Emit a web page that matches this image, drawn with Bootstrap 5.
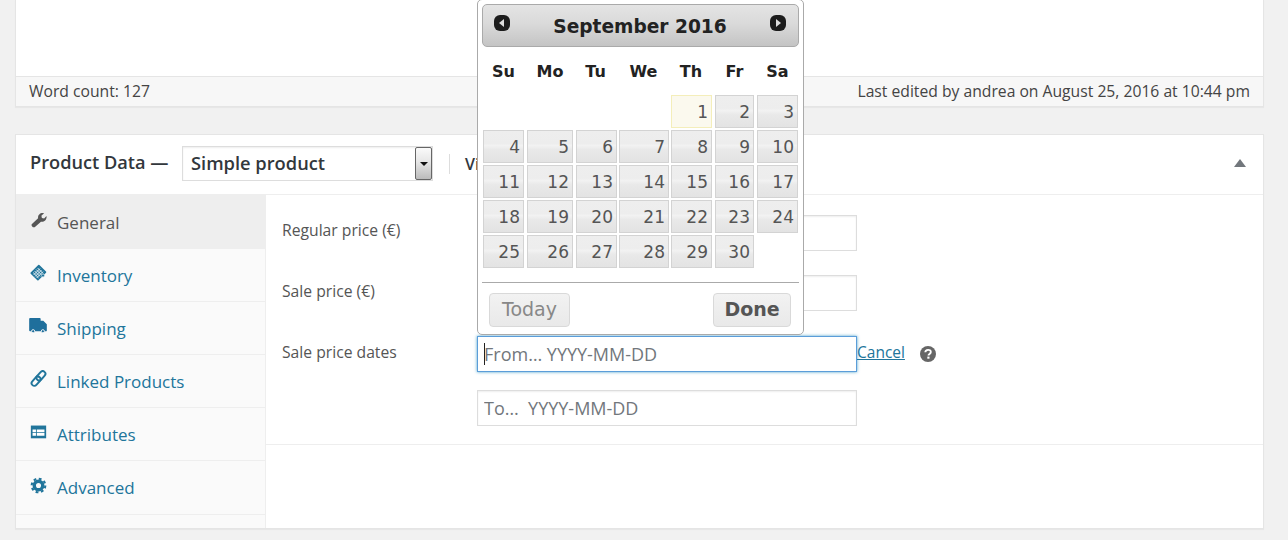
<!DOCTYPE html>
<html lang="en">
<head>
<meta charset="utf-8">
<title>Product Data</title>
<link href="https://cdn.jsdelivr.net/npm/bootstrap@5.3.0/dist/css/bootstrap.min.css" rel="stylesheet">
<style>
html,body{height:540px;overflow:hidden}
body{background:#f1f1f1;font-family:"Open Sans",sans-serif;font-size:15.7px;color:#555;padding:0 24px 0 15px;position:relative}
.edit-box{background:#fff;border:1px solid #e5e5e5;border-top:0;box-shadow:0 1px 1px rgba(0,0,0,.04);height:107px;margin-bottom:27px;display:flex;flex-direction:column;justify-content:flex-end}
.status-bar{height:30px;background:#f7f7f7;border-top:1px solid #e5e5e5;padding:0 13px;color:#444}
.data-box{background:#fff;border:1px solid #e5e5e5;box-shadow:0 1px 1px rgba(0,0,0,.04);height:395px;display:flex;flex-direction:column}
.data-head{height:60px;flex:none;border-bottom:1px solid #eee;padding:0 17px 2px 14px;display:flex;align-items:center}
.data-title{font-weight:600;font-size:18.200px;color:#32373c;white-space:nowrap;width:152px;flex:none;margin-top:-2px}
.type-select{width:251px;height:35px;flex:none;border:1px solid #ddd;display:flex;align-items:stretch;font-weight:600;font-size:18.300px;color:#32373c;box-shadow:inset 0 1px 2px rgba(0,0,0,.07)}
.type-name{flex:1;padding-left:8px;line-height:32px}
.type-arrow{width:17px;flex:none;border:1px solid #666;border-radius:2px;background:linear-gradient(#fafafa,#e6e6e6 45%,#bbb);display:flex;align-items:center;justify-content:center}
.type-arrow i{display:block;border:4px solid transparent;border-top-color:#111;border-bottom:0}
.head-sep{width:1px;height:20px;background:#ddd;margin:0 15px 0 16px;flex:none}
.virtual-label{font-weight:600;color:#32373c;font-size:16px}
.collapse-arrow{margin-left:auto;border:6px solid transparent;border-bottom:8px solid #72777c;border-top:0;margin-top:-2px}
.data-body{flex:1;display:flex;min-height:0}
.tab-col{width:250px;flex:none;background:#fafafa;border-right:1px solid #eee;margin:0;padding:0;list-style:none}
.tab-row{height:53px;border-bottom:1px solid #eee;display:flex;align-items:center;padding:0 14px;gap:10px;color:#21759b;font-size:17px}
.tab-row svg{flex:none;width:17px;height:17px;margin-top:-5px}
.tab-row span{margin-top:2px}
.tab-row.is-on{background:#eee;color:#555;height:54px;border-bottom:0}
.tab-row.tall{height:54px}
.tab-row.tall span{margin-top:0}
.panel-col{flex:1;min-width:0}
.form-area{padding:20px 0 18px 16px;border-bottom:1px solid #eee}
.field-row{display:flex;align-items:center;margin-bottom:24px}
.field-row.wide-gap{margin-bottom:25px}
.field-row.third{margin-bottom:18px}
.field-row.last{margin-bottom:0}
.field-label{width:195px;flex:none;padding-bottom:4px;color:#555}
.wide-gap .field-label,.third .field-label{padding-bottom:2px}
.field-wrap{position:relative;width:380px;flex:none}
.form-control.wc-input{height:36px;border-radius:0;border:1px solid #ddd;padding:0 6px;font-size:18px;box-shadow:inset 0 1px 2px rgba(0,0,0,.07);font-family:"Open Sans",sans-serif}
.form-control.wc-input::placeholder{color:#72777c;opacity:1}
.form-control.wc-input.is-focus{border-color:#5b9dd9;box-shadow:0 0 3px rgba(30,140,190,.8)}
.fake-caret{position:absolute;left:7px;top:7px;width:1px;height:22px;background:#222}
.cancel-link{color:#21759b;font-size:15.500px;margin-top:-3px}
.help-dot{width:16px;height:16px;margin-left:15px}
.picker{position:absolute;left:477px;top:-1px;width:327px;height:336px;background:#fff;border:1px solid #aaa;border-radius:5px;padding:4px;font-family:"DejaVu Sans",sans-serif;color:#222}
.picker-head{height:43px;border:1px solid #aaa;border-radius:5px;background:linear-gradient(#e4e4e4,#dadada 45%,#c4c4c4);display:flex;align-items:center;justify-content:space-between;padding:0 11px 0 10px;font-weight:700;font-size:18.600px;color:#222}
.picker-head span{margin-top:2px}
.picker-head svg{width:18px;height:18px;margin-top:-6px}
.picker-table{table-layout:fixed;width:315px;margin:0 0 0 1px;border-collapse:separate;border-spacing:0}
.picker-table th{height:48px;padding:2px 0 0;text-align:center;font-size:16px;font-weight:700;color:#222}
.picker-table td{padding:0;height:35px;vertical-align:top}
.picker-table th:nth-child(1),.picker-table th:nth-child(2),.picker-table th:nth-child(4),.picker-table th:nth-child(6){padding-right:3px}
.picker-table th:nth-child(3),.picker-table th:nth-child(5){padding-right:4px}
.day-cell{display:block;height:33px;border:1px solid #d3d3d3;background:linear-gradient(#eee,#ededed 40%,#f2f2f2 47%,#e9e9e9 60%,#e3e3e3);text-align:right;padding-right:3px;font-size:17px;line-height:32px;color:#555}
.day-cell.today{background:#fbf9ee;border-color:#f4eeba}
td:nth-child(1) .day-cell,td:nth-child(2) .day-cell,td:nth-child(5) .day-cell,td:nth-child(6) .day-cell{margin-right:3px}
td:nth-child(3) .day-cell,td:nth-child(4) .day-cell{margin-right:2px}
.picker-rule{height:1px;background:#aaa;margin:12px 0 10px;border:0;opacity:1}
.picker-foot{display:flex;justify-content:space-between;padding:0 7px}
.pick-btn{height:34px;border:1px solid #d9d9d9;border-radius:4px;background:linear-gradient(#f2f2f2,#eee 45%,#e9e9e9);font-family:"DejaVu Sans",sans-serif;font-size:19px;line-height:28px;padding:0 0 2px;color:#555}
.pick-btn.faded{width:81px;color:#888}
.pick-btn.strong{width:78px;font-weight:700;margin-right:1px}
</style>
</head>
<body>
<div class="edit-box">
  <div class="status-bar d-flex justify-content-between align-items-center">
    <span>Word count: 127</span>
    <span>Last edited by andrea on August 25, 2016 at 10:44 pm</span>
  </div>
</div>

<div class="data-box">
  <div class="data-head">
    <div class="data-title">Product Data —</div>
    <div class="type-select"><div class="type-name">Simple product</div><div class="type-arrow"><i></i></div></div>
    <div class="head-sep"></div>
    <div class="virtual-label">Virtual:</div>
    <div class="collapse-arrow"></div>
  </div>
  <div class="data-body">
    <ul class="tab-col">
      <li class="tab-row is-on">
        <svg viewBox="0 0 20 20"><path fill="#555" d="M2 15.500 9.500 8.600C9 5 12 1.600 16.500 2.600L13.400 5.600l.6 2.600 2.600.6 2.800-3c.8 4-2.600 7.400-6.500 6.700L5.500 19C3.500 20 1 17.500 2 15.500Z"/></svg>
        <span>General</span>
      </li>
      <li class="tab-row">
        <svg viewBox="0 0 20 20"><g transform="rotate(45 10 10)"><rect x="3.500" y="3" width="13" height="14.500" rx="1" fill="#21759b"/><path stroke="#fff" stroke-width=".9" d="M5.500 7h9M5.500 9.500h9M5.500 12h9M5.500 14.500h9M8 5.500v10.500M10.500 5.500v10.500M13 5.500v10.500"/><rect x="14.500" y="7" width="3.500" height="3.500" rx="1.500" fill="#21759b" stroke="#fff" stroke-width=".7"/></g></svg>
        <span>Inventory</span>
      </li>
      <li class="tab-row">
        <svg viewBox="0 0 20 17" style="width:18px;height:15px;margin-left:-1px"><path fill="#1f6f9c" d="M1 0h11a1 1 0 0 1 1 1v2h3l4 4v7.500a.5.5 0 0 1-.5.5H1a1 1 0 0 1-1-1V1a1 1 0 0 1 1-1Z"/><circle cx="4.500" cy="15" r="1.800" fill="#1f6f9c" stroke="#fafafa" stroke-width="1"/><circle cx="15.500" cy="15" r="1.800" fill="#1f6f9c" stroke="#fafafa" stroke-width="1"/></svg>
        <span>Shipping</span>
      </li>
      <li class="tab-row">
        <svg viewBox="0 0 20 20"><g transform="rotate(-48 10 10)" fill="none" stroke="#21759b" stroke-width="2.300"><rect x="-.5" y="6.800" width="12.500" height="6.400" rx="3.200"/><rect x="8" y="6.800" width="12.500" height="6.400" rx="3.200"/></g></svg>
        <span>Linked Products</span>
      </li>
      <li class="tab-row">
        <svg viewBox="0 0 20 20"><rect x="1" y="3" width="18" height="15" fill="#21759b"/><path fill="#fff" d="M3 7.500h4v3H3ZM8 7.500h9v3H8ZM3 11.500h4v3.500H3ZM8 11.500h9v3.500H8Z"/></svg>
        <span>Attributes</span>
      </li>
      <li class="tab-row tall">
        <svg viewBox="0 0 20 20"><circle cx="10" cy="10" r="5" fill="none" stroke="#21759b" stroke-width="4"/><circle cx="10" cy="10" r="8" fill="none" stroke="#21759b" stroke-width="2.500" stroke-dasharray="3.300 3"/></svg>
        <span>Advanced</span>
      </li>
    </ul>
    <div class="panel-col">
      <div class="form-area">
        <div class="field-row">
          <div class="field-label">Regular price (€)</div>
          <div class="field-wrap"><input class="form-control wc-input" type="text"></div>
        </div>
        <div class="field-row wide-gap">
          <div class="field-label">Sale price (€)</div>
          <div class="field-wrap"><input class="form-control wc-input" type="text"></div>
        </div>
        <div class="field-row third">
          <div class="field-label">Sale price dates</div>
          <div class="field-wrap"><input class="form-control wc-input is-focus" type="text" placeholder="From… YYYY-MM-DD"><span class="fake-caret"></span></div>
          <a href="#" class="cancel-link">Cancel</a>
          <svg class="help-dot" viewBox="0 0 16 16"><circle cx="8" cy="8" r="8" fill="#666"/><path d="M5.300 6.200C5.400 3.200 10.800 3 10.800 6c0 2-2.300 1.800-2.300 3.500" fill="none" stroke="#fff" stroke-width="1.900"/><rect x="7.300" y="10.600" width="2.200" height="2.100" fill="#fff"/></svg>
        </div>
        <div class="field-row last">
          <div class="field-label"></div>
          <div class="field-wrap"><input class="form-control wc-input" type="text" placeholder="To…  YYYY-MM-DD"></div>
        </div>
      </div>
    </div>
  </div>
</div>

<div class="picker">
  <div class="picker-head">
    <svg viewBox="0 0 18 18"><rect x="1" y="1" width="16" height="16" rx="6" fill="#1c1c1c"/><path d="M11 5v8L6 9Z" fill="#ddd"/></svg>
    <span>September 2016</span>
    <svg viewBox="0 0 18 18"><rect x="1" y="1" width="16" height="16" rx="6" fill="#1c1c1c"/><path d="M7 5v8l5-4Z" fill="#ddd"/></svg>
  </div>
  <table class="picker-table">
    <colgroup><col style="width:44px"><col style="width:49px"><col style="width:43px"><col style="width:52px"><col style="width:44px"><col style="width:42px"><col style="width:41px"></colgroup>
    <thead><tr><th>Su</th><th>Mo</th><th>Tu</th><th>We</th><th>Th</th><th>Fr</th><th>Sa</th></tr></thead>
    <tbody>
      <tr><td></td><td></td><td></td><td></td><td><a class="day-cell today text-decoration-none">1</a></td><td><a class="day-cell text-decoration-none">2</a></td><td><a class="day-cell text-decoration-none">3</a></td></tr>
      <tr><td><a class="day-cell text-decoration-none">4</a></td><td><a class="day-cell text-decoration-none">5</a></td><td><a class="day-cell text-decoration-none">6</a></td><td><a class="day-cell text-decoration-none">7</a></td><td><a class="day-cell text-decoration-none">8</a></td><td><a class="day-cell text-decoration-none">9</a></td><td><a class="day-cell text-decoration-none">10</a></td></tr>
      <tr><td><a class="day-cell text-decoration-none">11</a></td><td><a class="day-cell text-decoration-none">12</a></td><td><a class="day-cell text-decoration-none">13</a></td><td><a class="day-cell text-decoration-none">14</a></td><td><a class="day-cell text-decoration-none">15</a></td><td><a class="day-cell text-decoration-none">16</a></td><td><a class="day-cell text-decoration-none">17</a></td></tr>
      <tr><td><a class="day-cell text-decoration-none">18</a></td><td><a class="day-cell text-decoration-none">19</a></td><td><a class="day-cell text-decoration-none">20</a></td><td><a class="day-cell text-decoration-none">21</a></td><td><a class="day-cell text-decoration-none">22</a></td><td><a class="day-cell text-decoration-none">23</a></td><td><a class="day-cell text-decoration-none">24</a></td></tr>
      <tr><td><a class="day-cell text-decoration-none">25</a></td><td><a class="day-cell text-decoration-none">26</a></td><td><a class="day-cell text-decoration-none">27</a></td><td><a class="day-cell text-decoration-none">28</a></td><td><a class="day-cell text-decoration-none">29</a></td><td><a class="day-cell text-decoration-none">30</a></td><td></td></tr>
    </tbody>
  </table>
  <hr class="picker-rule">
  <div class="picker-foot">
    <button type="button" class="pick-btn faded">Today</button>
    <button type="button" class="pick-btn strong">Done</button>
  </div>
</div>
<script src="https://cdn.jsdelivr.net/npm/bootstrap@5.3.0/dist/js/bootstrap.bundle.min.js"></script>
</body>
</html>
